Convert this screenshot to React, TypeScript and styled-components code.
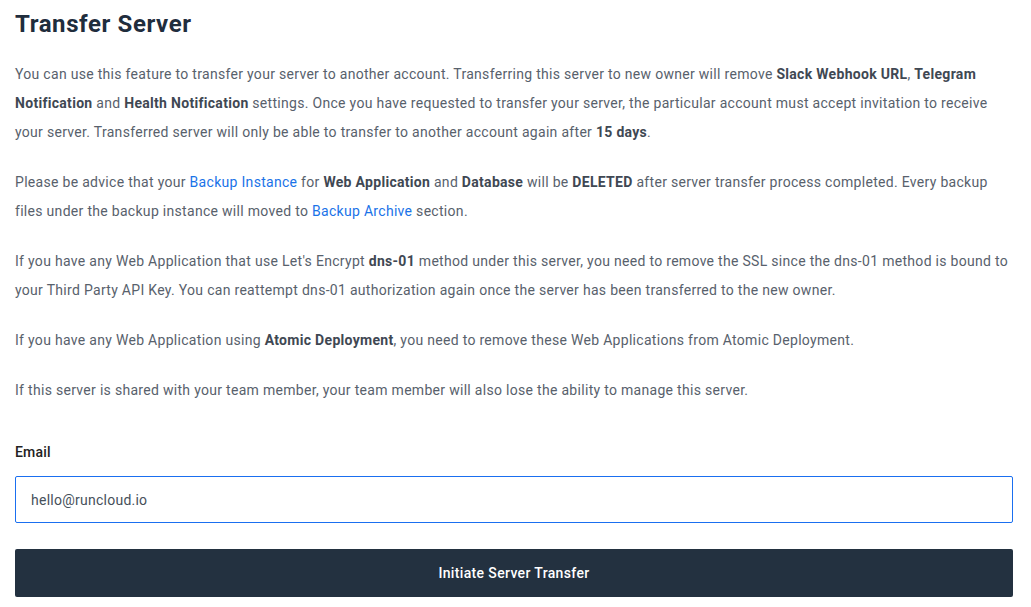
import React from "react";
import styled, { createGlobalStyle } from "styled-components";

const Global = createGlobalStyle`
  html, body { margin: 0; padding: 0; background: #ffffff; }
  body { font-family: Roboto, "Liberation Sans", Arial, sans-serif; -webkit-font-smoothing: antialiased; }
  * { box-sizing: border-box; }
`;

const Page = styled.div`
  padding: 10px 18px 10px 15px;
  width: 1031px;
`;

const Title = styled.h1`
  margin: 0 0 21px;
  font-size: 24px;
  line-height: 29px;
  font-weight: 700;
  letter-spacing: 0.6px;
  color: #1f2d3d;
`;

const Para = styled.p`
  margin: 0 0 21px;
  font-size: 14px;
  line-height: 29px;
  letter-spacing: 0.3px;
  color: #58616c;
  &:last-of-type { margin-bottom: 0; }
`;

const B = styled.strong`
  font-weight: 700;
  color: #3f4853;
`;

const Link = styled.a`
  color: #1a73e8;
  text-decoration: none;
`;

const Form = styled.form`
  margin-top: 37px;
  display: flex;
  flex-direction: column;
`;

const Label = styled.label`
  font-size: 14px;
  line-height: 20px;
  font-weight: 500;
  letter-spacing: 0.2px;
  color: #222;
  margin-bottom: 14px;
`;

const Input = styled.input`
  height: 47px;
  border: 1px solid #1a6ff0;
  border-radius: 2px;
  padding: 0 15px;
  font-family: inherit;
  font-size: 14px;
  letter-spacing: 0.25px;
  color: #46505a;
  outline: none;
  margin-bottom: 26px;
`;

const Button = styled.button`
  height: 48px;
  border: none;
  border-radius: 2px;
  background: #233140;
  color: #ffffff;
  font-family: inherit;
  font-size: 14px;
  font-weight: 500;
  letter-spacing: 0.35px;
  cursor: pointer;
`;

export default function App() {
  return (
    <Page>
      <Global />
      <Title>Transfer Server</Title>
      <Para>
        You can use this feature to transfer your server to another account. Transferring this server to new owner will remove{" "}
        <B>Slack Webhook URL</B>, <B>Telegram Notification</B> and <B>Health Notification</B> settings. Once you have requested to
        transfer your server, the particular account must accept invitation to receive your server. Transferred server will only be
        able to transfer to another account again after <B>15 days</B>.
      </Para>
      <Para>
        Please be advice that your <Link href="#">Backup Instance</Link> for <B>Web Application</B> and <B>Database</B> will be{" "}
        <B>DELETED</B> after server transfer process completed. Every backup files under the backup instance will moved to{" "}
        <Link href="#">Backup Archive</Link> section.
      </Para>
      <Para>
        If you have any Web Application that use Let's Encrypt <B>dns-01</B> method under this server, you need to remove the SSL
        since the dns-01 method is bound to your Third Party API Key. You can reattempt dns-01 authorization again once the server
        has been transferred to the new owner.
      </Para>
      <Para>
        If you have any Web Application using <B>Atomic Deployment</B>, you need to remove these Web Applications from Atomic
        Deployment.
      </Para>
      <Para>If this server is shared with your team member, your team member will also lose the ability to manage this server.</Para>
      <Form onSubmit={(e) => e.preventDefault()}>
        <Label htmlFor="email">Email</Label>
        <Input id="email" type="email" defaultValue="hello@runcloud.io" />
        <Button type="submit">Initiate Server Transfer</Button>
      </Form>
    </Page>
  );
}
